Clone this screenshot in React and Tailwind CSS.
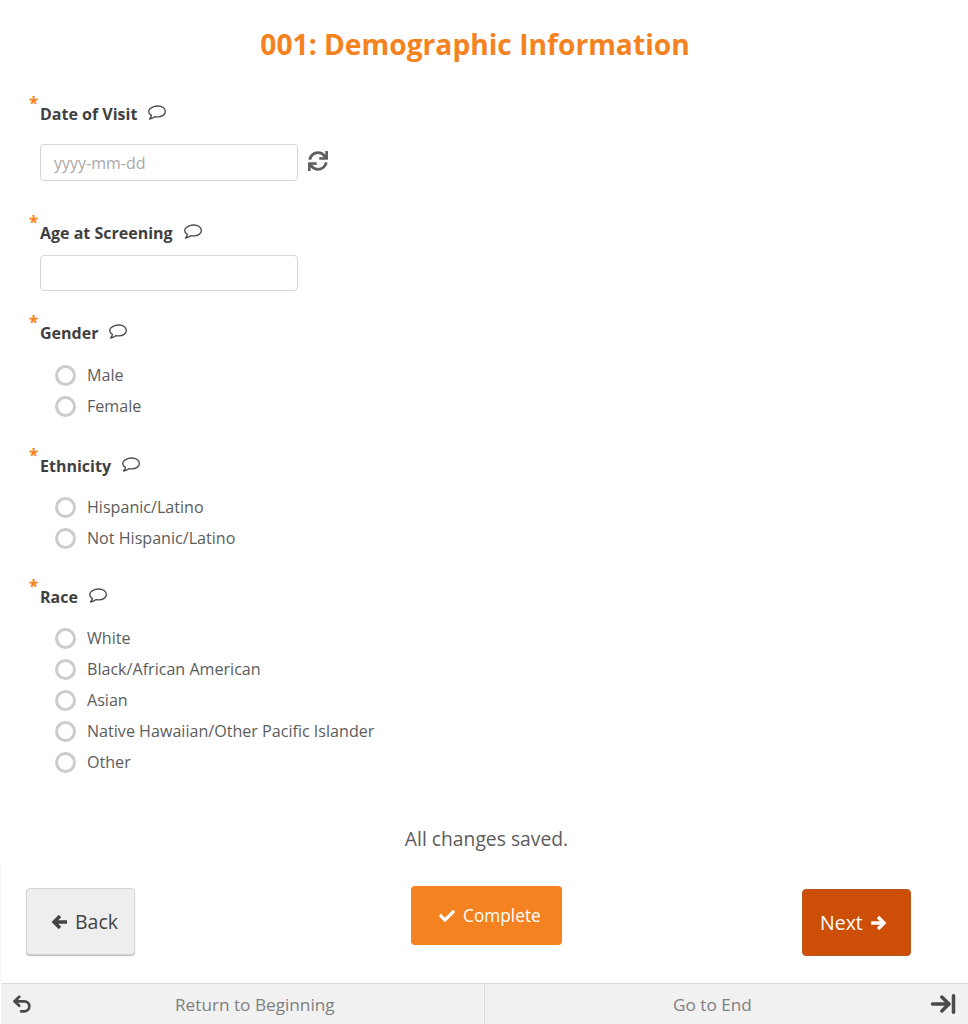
import { ArrowRightToLine, Undo2 } from "lucide-react";
import { FaCheck, FaSync } from "react-icons/fa";

function Bubble() {
    return (
        <svg width="18" height="16" viewBox="1 0.5 16 13.8" fill="none" stroke="#4a4a4a" strokeWidth="1.2" className="ml-[11px] -mt-[3px]">
            <path d="M9.8 1.2c3.6 0 6.600 2 6.600 4.800s-3 4.900-6.600 4.900c-.9 0-1.700-.1-2.400-.3-1.100 1-2.800 2-5.100 2.100.8-.7 1.500-1.700 1.700-3.200C2.500 8.600 1.600 7.400 1.600 6c0-2.800 4.200-4.800 8.200-4.800z" strokeLinejoin="round" />
        </svg>
    );
}

function Arrow({ left }) {
    return (
        <svg width="16" height="16" viewBox="0 0 16 16" fill="none" stroke="currentColor" strokeWidth="3.400" className={left ? "" : "rotate-180"}>
            <path d="M16 8H3M9 2 3 8l6 6" />
        </svg>
    );
}

function Label({ text, className }) {
    return (
        <div className={`relative flex h-6 items-center ${className}`}>
            <span className="absolute -left-[11px] -top-[10px] text-[17px] font-bold leading-6 text-[#f58220]">*</span>
            <span className="text-base font-bold text-[#3f3f3f]">{text}</span>
            <Bubble />
        </div>
    );
}

function Radio({ text }) {
    return (
        <label className="flex h-[31px] items-center pl-[15px]">
            <span className="size-[21px] rounded-full border-[3px] border-[#cccccc] bg-white" />
            <span className="ml-[11px] text-[16.1px] text-[#5c5c5c]">{text}</span>
        </label>
    );
}

export default function App() {
    return (
        <div className="flex h-[1024px] w-[968px] flex-col bg-white font-['Open_Sans',sans-serif]">
            <h1 className="mt-[23px] h-[42px] pr-[18px] text-center text-[28.2px] font-bold leading-[42px] text-[#f58220]">001: Demographic Information</h1>

            <div className="pl-10">
                <Label text="Date of Visit" className="mt-[37px]" />
                <div className="mt-[18px] flex items-center">
                    <input placeholder="yyyy-mm-dd" className="h-[37px] w-[258px] rounded border border-[#d6d6d6] px-[13px] text-base placeholder:text-[#a9a9a9]" />
                    <FaSync className="-mt-[3px] ml-[10px] text-[20px] text-[#606060]" />
                </div>

                <Label text="Age at Screening" className="mt-[40px]" />
                <input className="mt-[10px] block h-[36px] w-[258px] rounded border border-[#d6d6d6] px-[13px] text-base" />

                <Label text="Gender" className="mt-[30px]" />
                <div className="mt-[15px]">
                    <Radio text="Male" />
                    <Radio text="Female" />
                </div>

                <Label text="Ethnicity" className="mt-[32px]" />
                <div className="mt-[14px]">
                    <Radio text="Hispanic/Latino" />
                    <Radio text="Not Hispanic/Latino" />
                </div>

                <Label text="Race" className="mt-[31px]" />
                <div className="mt-[14px]">
                    <Radio text="White" />
                    <Radio text="Black/African American" />
                    <Radio text="Asian" />
                    <Radio text="Native Hawaiian/Other Pacific Islander" />
                    <Radio text="Other" />
                </div>
            </div>

            <p className="mt-[47px] pl-[5px] text-center text-[19.3px] leading-7 text-[#5c5c5c]">All changes saved.</p>

            <div className="mt-[12px] flex h-[118px] items-start border-l border-[#f4f4f4] pl-[25px] pt-[21px]">
                <button className="mt-[2px] flex h-[67px] w-[109px] items-center justify-start gap-2 rounded border border-[#d4d4d4] bg-[#eeeeee] pl-[24px] text-[19.5px] text-[#444444] shadow-[0_1px_1px_#bbbbbb]">
                    <Arrow left />
                    Back
                </button>
                <button className="ml-[276px] flex h-[59px] w-[151px] items-center justify-start gap-2 rounded bg-[#f58220] pl-[28px] text-[17.3px] font-normal text-white">
                    <FaCheck className="text-base" />
                    Complete
                </button>
                <button className="ml-[240px] mt-[3px] flex h-[67px] w-[109px] items-center justify-start gap-2 rounded border border-[#b8531a] bg-[#cd4f07] pl-[17px] text-[19.5px] text-white">
                    Next
                    <Arrow />
                </button>
            </div>

            <div className="ml-px flex h-[41px] border-t border-[#dddddd] bg-[#f1f1f1] text-[17.2px] text-[#808080]">
                <div className="flex w-[484px] items-center border-r border-[#dddddd] pl-[10px]">
                    <Undo2 size={22} strokeWidth={3} className="text-[#4a4a4a]" />
                    <span className="ml-[142px] pt-[2px]">Return to Beginning</span>
                </div>
                <div className="flex flex-1 items-center pr-[11px]">
                    <span className="ml-[188px] pt-[2px]">Go to End</span>
                    <ArrowRightToLine size={28} strokeWidth={3} className="ml-auto text-[#4a4a4a]" />
                </div>
            </div>
        </div>
    );
}
